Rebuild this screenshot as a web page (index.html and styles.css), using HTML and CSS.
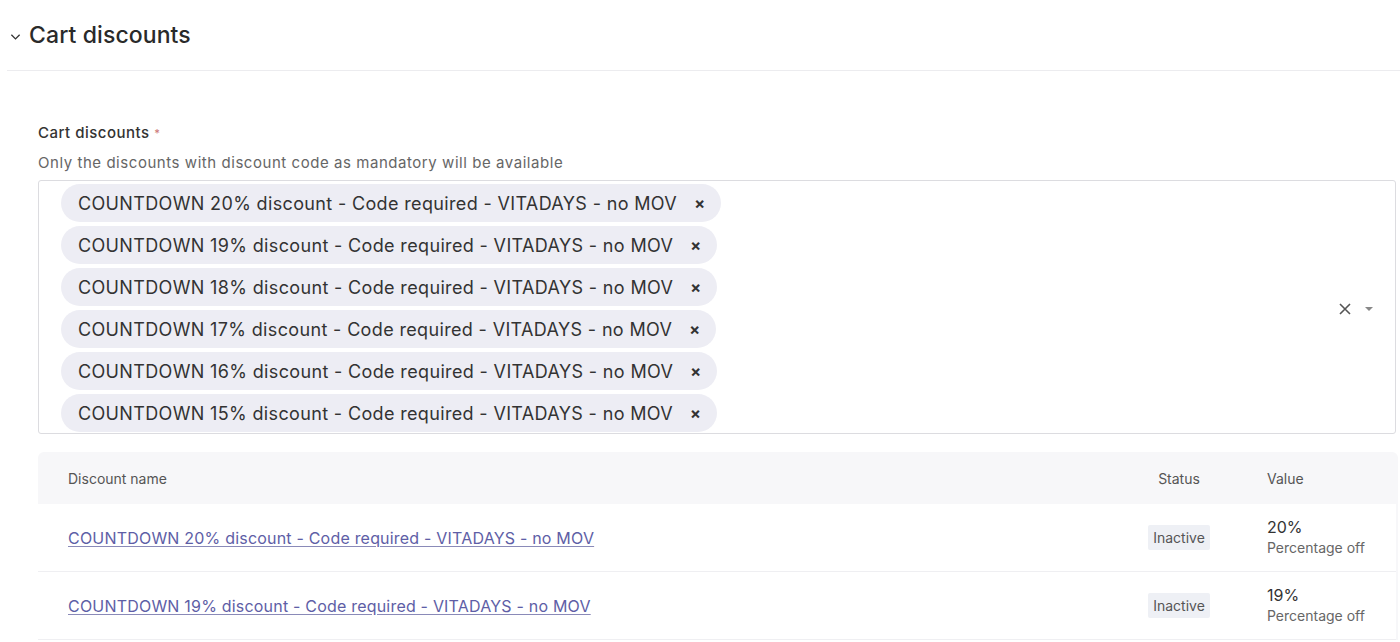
FILE: index.html
```html
<!DOCTYPE html>
<html>
<head>
<meta charset="utf-8">
<link rel="stylesheet" href="styles.css">
</head>
<body>
<div class="page">
  <div class="section-head">
    <svg class="chev" width="12" height="8" viewBox="0 0 12 8"><path d="M1.5 1.5 L6 6 L10.5 1.5" fill="none" stroke="#333" stroke-width="1.4"/></svg>
    <span class="section-title">Cart discounts</span>
  </div>
  <div class="content">
    <div class="label">Cart discounts <span class="req">*</span></div>
    <div class="help">Only the discounts with discount code as mandatory will be available</div>
    <div class="select">
      <div class="chips">
        <span class="chip"><span class="chip-text">COUNTDOWN 20% discount - Code required - VITADAYS - no MOV</span><span class="chip-x">×</span></span>
        <span class="chip"><span class="chip-text">COUNTDOWN 19% discount - Code required - VITADAYS - no MOV</span><span class="chip-x">×</span></span>
        <span class="chip"><span class="chip-text">COUNTDOWN 18% discount - Code required - VITADAYS - no MOV</span><span class="chip-x">×</span></span>
        <span class="chip"><span class="chip-text">COUNTDOWN 17% discount - Code required - VITADAYS - no MOV</span><span class="chip-x">×</span></span>
        <span class="chip"><span class="chip-text">COUNTDOWN 16% discount - Code required - VITADAYS - no MOV</span><span class="chip-x">×</span></span>
        <span class="chip"><span class="chip-text">COUNTDOWN 15% discount - Code required - VITADAYS - no MOV</span><span class="chip-x">×</span></span>
      </div>
      <div class="controls">
        <svg width="14" height="14" viewBox="0 0 14 14"><path d="M2 2 L12 12 M12 2 L2 12" stroke="#555" stroke-width="1.6"/></svg>
        <svg width="10" height="6" viewBox="0 0 10 6"><path d="M1 1 L9 1 L5 5 Z" fill="#888"/></svg>
      </div>
    </div>
    <div class="table">
      <div class="row head">
        <div class="c-name">Discount name</div>
        <div class="c-status">Status</div>
        <div class="c-value">Value</div>
      </div>
      <div class="row body">
        <div class="c-name"><a class="link" href="#">COUNTDOWN 20% discount - Code required - VITADAYS - no MOV</a></div>
        <div class="c-status"><span class="badge">Inactive</span></div>
        <div class="c-value"><div class="val">20%</div><div class="val-sub">Percentage off</div></div>
      </div>
      <div class="row body">
        <div class="c-name"><a class="link" href="#">COUNTDOWN 19% discount - Code required - VITADAYS - no MOV</a></div>
        <div class="c-status"><span class="badge">Inactive</span></div>
        <div class="c-value"><div class="val">19%</div><div class="val-sub">Percentage off</div></div>
      </div>
    </div>
  </div>
</div>
</body>
</html>
```

FILE: styles.css
```css
* { box-sizing: border-box; }
html, body { margin: 0; padding: 0; background: #fff; }
body { font-family: Inter, "Noto Sans", sans-serif; color: #2b2b2b; overflow: hidden; }
.page { width: 1400px; height: 642px; }
.section-head {
  display: flex; align-items: center; gap: 8px;
  height: 71px; padding: 0 0 0 3px; margin-left: 7px;
  border-bottom: 1px solid #ececef;
}
.chev { margin-top: 3px; width: 11px; }
.section-title { font-size: 23px; font-weight: 500; color: #2a2a2a; letter-spacing: 0.1px; }
.content { padding: 52px 4px 0 38px; }
.label { font-size: 15px; font-weight: 500; color: #333; line-height: 20px; letter-spacing: 0.5px; }
.req { color: #c77; font-size: 11px; vertical-align: top; }
.help { font-size: 15px; color: #666; line-height: 20px; margin-top: 10px; letter-spacing: 0.55px; }
.select {
  margin-top: 7px; width: 1358px; height: 254px;
  border: 1px solid #dcdce0; border-radius: 3px;
  display: flex; align-items: center; justify-content: space-between;
  padding: 2px 21px 0 22px;
}
.chips { display: flex; flex-direction: column; align-items: flex-start; gap: 4px; }
.chip {
  display: inline-flex; align-items: center; height: 38px;
  background: #ededf4; border-radius: 19px;
  padding: 0 16px 0 17px; font-size: 18px; color: #333; letter-spacing: 0.35px;
}
.chip-x { font-size: 16px; font-weight: 700; margin-left: 17px; color: #333; letter-spacing: 0; }
.controls { display: flex; align-items: center; gap: 12px; margin-top: 2px; }
.table {
  margin-top: 18px; width: 1360px;
  background: #f7f7f9; border-radius: 6px 6px 0 0;
  padding: 0 2px 0 0;
}
.row { display: flex; align-items: center; }
.head { height: 52px; font-size: 14px; color: #555; }
.body { height: 68px; background: #fff; border-bottom: 1px solid #efeff2; }
.c-name { flex: 1; padding-left: 30px; }
.c-status { width: 176px; display: flex; justify-content: center; }
.c-value { width: 129px; }
.link { font-size: 16px; color: #5e5ea6; letter-spacing: 0.2px; text-decoration: underline; text-decoration-color: #8a8ab8; text-underline-offset: 2px; }
.badge { background: #eef0f5; color: #555; font-size: 14px; padding: 4px 5px; border-radius: 2px; }
.val { font-size: 16px; color: #333; line-height: 20px; }
.val-sub { font-size: 14px; color: #666; line-height: 22px; }
```
